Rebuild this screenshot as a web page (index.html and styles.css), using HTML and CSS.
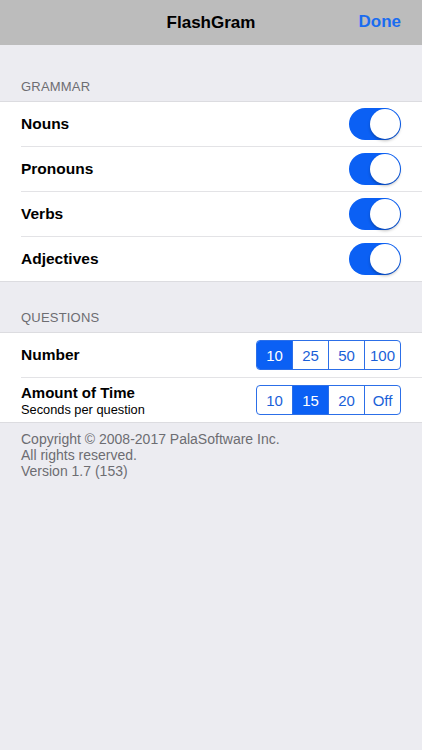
FILE: index.html
```html
<!DOCTYPE html>
<html>
<head>
    <title>FlashGram Settings</title>
    <meta name="viewport" content="width=device-width, initial-scale=1">
    <link rel="stylesheet" href="styles.css">
</head>
<body>
    <div class="navbar">
        <span class="nav-title">FlashGram</span>
        <span class="nav-done">Done</span>
    </div>

    <div class="section-header">GRAMMAR</div>
    <div class="group">
        <div class="row">
            <span class="row-label">Nouns</span>
            <span class="switch"><span class="knob"></span></span>
        </div>
        <div class="row">
            <span class="row-label">Pronouns</span>
            <span class="switch"><span class="knob"></span></span>
        </div>
        <div class="row">
            <span class="row-label">Verbs</span>
            <span class="switch"><span class="knob"></span></span>
        </div>
        <div class="row">
            <span class="row-label">Adjectives</span>
            <span class="switch"><span class="knob"></span></span>
        </div>
    </div>

    <div class="section-header second">QUESTIONS</div>
    <div class="group">
        <div class="row">
            <span class="row-label">Number</span>
            <div class="segmented">
                <span class="segment selected">10</span>
                <span class="segment">25</span>
                <span class="segment">50</span>
                <span class="segment">100</span>
            </div>
        </div>
        <div class="row">
            <div class="row-text">
                <span class="row-label small">Amount of Time</span>
                <span class="row-sub">Seconds per question</span>
            </div>
            <div class="segmented">
                <span class="segment">10</span>
                <span class="segment selected">15</span>
                <span class="segment">20</span>
                <span class="segment">Off</span>
            </div>
        </div>
    </div>

    <div class="footer">
        Copyright © 2008-2017 PalaSoftware Inc.<br>
        All rights reserved.<br>
        Version 1.7 (153)
    </div>
</body>
</html>
```

FILE: styles.css
```css
body {
    margin: 0;
    background-color: #ececf1;
    font-family: "Liberation Sans", Arial, sans-serif;
    color: #000;
}
.navbar {
    height: 45px;
    background-color: #bcbcbc;
    display: flex;
    align-items: center;
    justify-content: center;
    position: relative;
}
.nav-title {
    font-size: 17px;
    font-weight: bold;
}
.nav-done {
    position: absolute;
    right: 21px;
    top: 12px;
    font-size: 17px;
    font-weight: bold;
    color: #1a6cf0;
}
.section-header {
    padding: 34px 21px 7px;
    font-size: 13px;
    color: #6d6d72;
    letter-spacing: 0.2px;
}
.section-header.second {
    padding-top: 28px;
}
.group {
    background-color: #fff;
    border-top: 1px solid #dcdce0;
    border-bottom: 1px solid #dcdce0;
}
.row {
    height: 44px;
    margin-left: 21px;
    padding-right: 21px;
    display: flex;
    align-items: center;
    justify-content: space-between;
    border-bottom: 1px solid #e3e3e6;
}
.row:last-child {
    border-bottom: none;
}
.row-label {
    font-size: 15.5px;
    font-weight: bold;
}
.row-label.small {
    font-size: 15px;
}
.row-text {
    display: flex;
    flex-direction: column;
}
.row-sub {
    font-size: 12.8px;
    margin-top: 1px;
}
.switch {
    width: 52px;
    height: 32px;
    border-radius: 16px;
    background-color: #0b60f4;
    display: flex;
    align-items: center;
    justify-content: flex-end;
    padding: 0 1px;
    box-sizing: border-box;
}
.knob {
    width: 30px;
    height: 30px;
    border-radius: 50%;
    background-color: #fff;
    box-shadow: 0 2px 3px rgba(0, 0, 0, 0.25);
}
.segmented {
    display: flex;
    border: 1px solid #2c6fe8;
    border-radius: 4px;
    overflow: hidden;
}
.segment {
    width: 35px;
    height: 28px;
    display: flex;
    align-items: center;
    justify-content: center;
    font-size: 15px;
    color: #1a5fd8;
    border-left: 1px solid #2c6fe8;
}
.segment:first-child {
    border-left: none;
}
.segment.selected {
    background-color: #0b60f4;
    color: #fff;
}
.footer {
    padding: 8px 21px;
    font-size: 14px;
    line-height: 16px;
    color: #6d6d72;
}
```
